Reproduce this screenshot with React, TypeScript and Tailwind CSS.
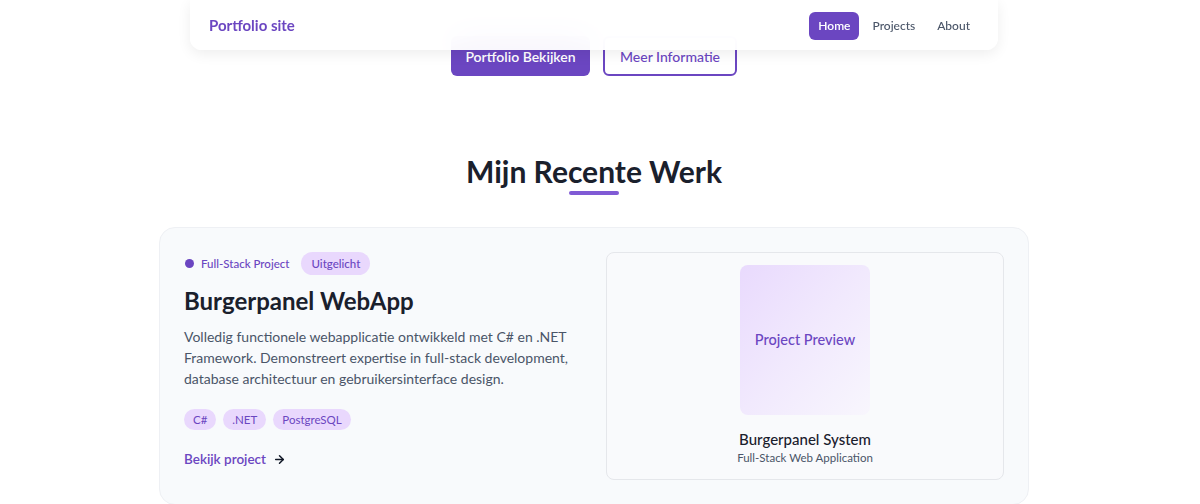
import React from 'react';
import { ArrowRight } from 'lucide-react';

const navLinks = ['Home', 'Projects', 'About'];
const tags = ['C#', '.NET', 'PostgreSQL'];

const Navbar: React.FC = () => (
  <nav className="absolute left-[190px] top-0 z-10 flex h-[50px] w-[808px] items-center justify-between rounded-b-xl bg-white/95 pl-[19px] pr-[19px] shadow-[0_4px_14px_rgba(0,0,0,0.07)] backdrop-blur-lg">
    <span className="text-[15px] font-bold text-[#6b46c1]">Portfolio site</span>
    <div className="flex items-center gap-[4px]">
      {navLinks.map((link) => (
        <a
          key={link}
          href="#"
          className={
            link === 'Home'
              ? 'mt-[2px] rounded-md bg-[#6b46c1] px-[9px] py-1 text-[12px] font-semibold leading-5 text-white'
              : 'mt-[2px] rounded-md px-[9px] py-1 text-[12px] font-medium leading-5 text-[#4a5568]'
          }
        >
          {link}
        </a>
      ))}
    </div>
  </nav>
);

const ProjectCard: React.FC = () => (
  <div className="grid w-[870px] grid-cols-2 gap-6 rounded-2xl border border-[#eef0f4] bg-[#f8fafc] p-[24px]">
    {/* Left column */}
    <div className="flex flex-col">
      <div className="flex items-center gap-3">
        <div className="flex items-center gap-[7px]">
          <span className="ml-[1px] h-[9px] w-[9px] rounded-full bg-[#6b46c1]" />
          <span className="text-[11.5px] font-medium text-[#6b46c1]">Full-Stack Project</span>
        </div>
        <span className="rounded-full bg-[#e9d8fd] px-[10px] py-[3px] text-[11.5px] font-medium text-[#6b46c1]">
          Uitgelicht
        </span>
      </div>
      <h3 className="mt-[10px] text-[24px] font-bold leading-8 text-[#1a202c]">Burgerpanel WebApp</h3>
      <p className="mt-[9px] text-[14px] leading-[21px] text-[#4a5568]">
        Volledig functionele webapplicatie ontwikkeld met C# en .NET Framework. Demonstreert expertise in
        full-stack development, database architectuur en gebruikersinterface design.
      </p>
      <div className="mt-[20px] flex gap-[7px]">
        {tags.map((tag) => (
          <span
            key={tag}
            className="rounded-full bg-[#e9d8fd] px-[9px] py-[2px] text-[11.5px] leading-[17px] text-[#6b46c1]"
          >
            {tag}
          </span>
        ))}
      </div>
      <a href="#" className="mt-[19px] flex items-center gap-[7px] text-[13.5px] font-semibold leading-5 text-[#6b46c1]">
        Bekijk project
        <ArrowRight className="h-[13px] w-[13px] text-[#111827]" strokeWidth={2.75} />
      </a>
    </div>

    {/* Right column */}
    <div className="flex h-[228px] flex-col items-center justify-center rounded-lg border border-[#e5e7eb] bg-[#f9fafc]">
      <div className="flex h-[150px] w-[130px] items-center justify-center rounded-lg bg-gradient-to-br from-[#e9dafd] via-[#f1e9fd] to-[#f8f6fd]">
        <span className="text-[14.5px] font-medium text-[#6b46c1]">Project Preview</span>
      </div>
      <div className="mt-[14px] text-[15px] font-medium leading-5 text-[#1a202c]">Burgerpanel System</div>
      <div className="text-[11.5px] leading-[18px] text-[#4a5568]">Full-Stack Web Application</div>
    </div>
  </div>
);

export default function App() {
  return (
    <div
      className="relative h-[504px] w-[1188px] overflow-hidden bg-white"
      style={{ fontFamily: '"Segoe UI", Lato, sans-serif' }}
    >
      <Navbar />

      <main className="flex flex-col items-center pt-[36px]">
        {/* Hero buttons */}
        <div className="flex gap-[13px]">
          <button className="h-10 w-[139px] rounded-md bg-[#6b46c1] text-[14px] font-semibold text-white">
            Portfolio Bekijken
          </button>
          <button className="h-10 w-[134px] rounded-md border-2 border-[#6b46c1] bg-white text-[14px] font-medium text-[#6b46c1]">
            Meer Informatie
          </button>
        </div>

        {/* Recent work */}
        <h2 className="mt-[77px] text-[30px] font-bold leading-9 text-[#1a202c]">Mijn Recente Werk</h2>
        <div className="mt-[2px] h-1 w-[50px] rounded-full bg-[#805ad5]" />

        <div className="mt-[32px]">
          <ProjectCard />
        </div>
      </main>
    </div>
  );
}
